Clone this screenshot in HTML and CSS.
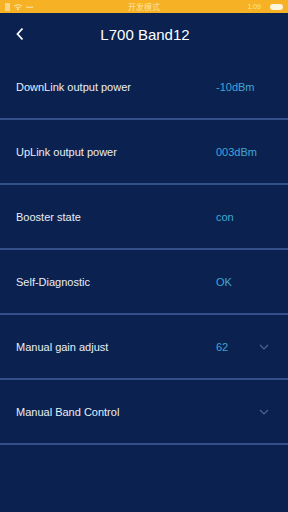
FILE: index.html
```html
<!DOCTYPE html>
<html lang="en">
<head>
    <meta charset="UTF-8">
    <meta name="viewport" content="width=device-width, initial-scale=1.0">
    <title>L700 Band12</title>
    <link rel="stylesheet" href="styles.css">
</head>
<body>
    <div class="statusbar">
        <div class="sb-left">
            <span class="sb-sim"></span>
            <svg class="sb-wifi" width="10" height="8" viewBox="0 0 10 8"><path d="M1 3 Q5 0 9 3 M2.5 4.8 Q5 3 7.5 4.8 M5 7 L4 6 Q5 5.3 6 6 Z" stroke="#fbe3a8" stroke-width="1" fill="none"/></svg>
            <span class="sb-dots">• • • •</span>
        </div>
        <div class="sb-title">开发模式</div>
        <div class="sb-right">
            <span class="sb-time">1:09</span>
            <span class="sb-battery"></span>
        </div>
    </div>

    <div class="header">
        <svg class="back" width="8" height="14" viewBox="0 0 8 14"><path d="M6.5 1.5 L1.5 7 L6.5 12.5" stroke="#ffffff" stroke-width="1.8" fill="none"/></svg>
        <div class="title">L700 Band12</div>
    </div>

    <ul class="list">
        <li class="row"><span class="label">DownLink output power</span><span class="value">-10dBm</span></li>
        <li class="row"><span class="label">UpLink output power</span><span class="value">003dBm</span></li>
        <li class="row"><span class="label">Booster state</span><span class="value">con</span></li>
        <li class="row"><span class="label">Self-Diagnostic</span><span class="value">OK</span></li>
        <li class="row">
            <span class="label">Manual gain adjust</span><span class="value">62</span>
            <svg class="arrow" width="10" height="6" viewBox="0 0 10 6"><path d="M1 1 L5 5 L9 1" stroke="#4a6596" stroke-width="1.2" fill="none"/></svg>
        </li>
        <li class="row">
            <span class="label">Manual Band Control</span><span class="value"></span>
            <svg class="arrow" width="10" height="6" viewBox="0 0 10 6"><path d="M1 1 L5 5 L9 1" stroke="#4a6596" stroke-width="1.2" fill="none"/></svg>
        </li>
    </ul>
</body>
</html>
```

FILE: styles.css
```css
body {
    margin: 0;
    padding: 0;
    height: 512px;
    background: #0b2250;
    font-family: 'Liberation Sans', Arial, sans-serif;
    color: #e9eef7;
    overflow: hidden;
}
.statusbar {
    height: 13px;
    background: #f6b224;
    display: flex;
    align-items: center;
    justify-content: space-between;
    padding: 0 5px;
    position: relative;
    font-size: 8px;
    color: #fbe0a0;
}
.sb-left, .sb-right {
    display: flex;
    align-items: center;
    gap: 3px;
}
.sb-sim {
    width: 5px;
    height: 8px;
    background: #f9d58a;
}
.sb-dots {
    font-size: 6px;
    letter-spacing: -1px;
}
.sb-title {
    position: absolute;
    left: 0;
    right: 0;
    text-align: center;
    font-family: 'Noto Sans CJK SC', sans-serif;
    font-size: 8px;
    color: #fde3a6;
}
.sb-time {
    font-size: 7px;
    margin-right: 6px;
}
.sb-battery {
    width: 13px;
    height: 6px;
    border-radius: 3px;
    background: #fff4dc;
}
.header {
    height: 42px;
    display: flex;
    align-items: center;
    justify-content: center;
    position: relative;
}
.back {
    position: absolute;
    left: 16px;
    top: 14px;
}
.title {
    font-size: 15px;
    color: #ffffff;
    margin-left: 2px;
}
.list {
    list-style: none;
    margin: 0;
    padding: 0;
}
.row {
    height: 63px;
    border-bottom: 2px solid #34508a;
    display: flex;
    align-items: center;
    padding: 0 16px;
    font-size: 11px;
}
.label {
    width: 200px;
}
.value {
    color: #41a6d2;
    width: 42px;
}
.arrow {
    margin-left: 1px;
}
```
